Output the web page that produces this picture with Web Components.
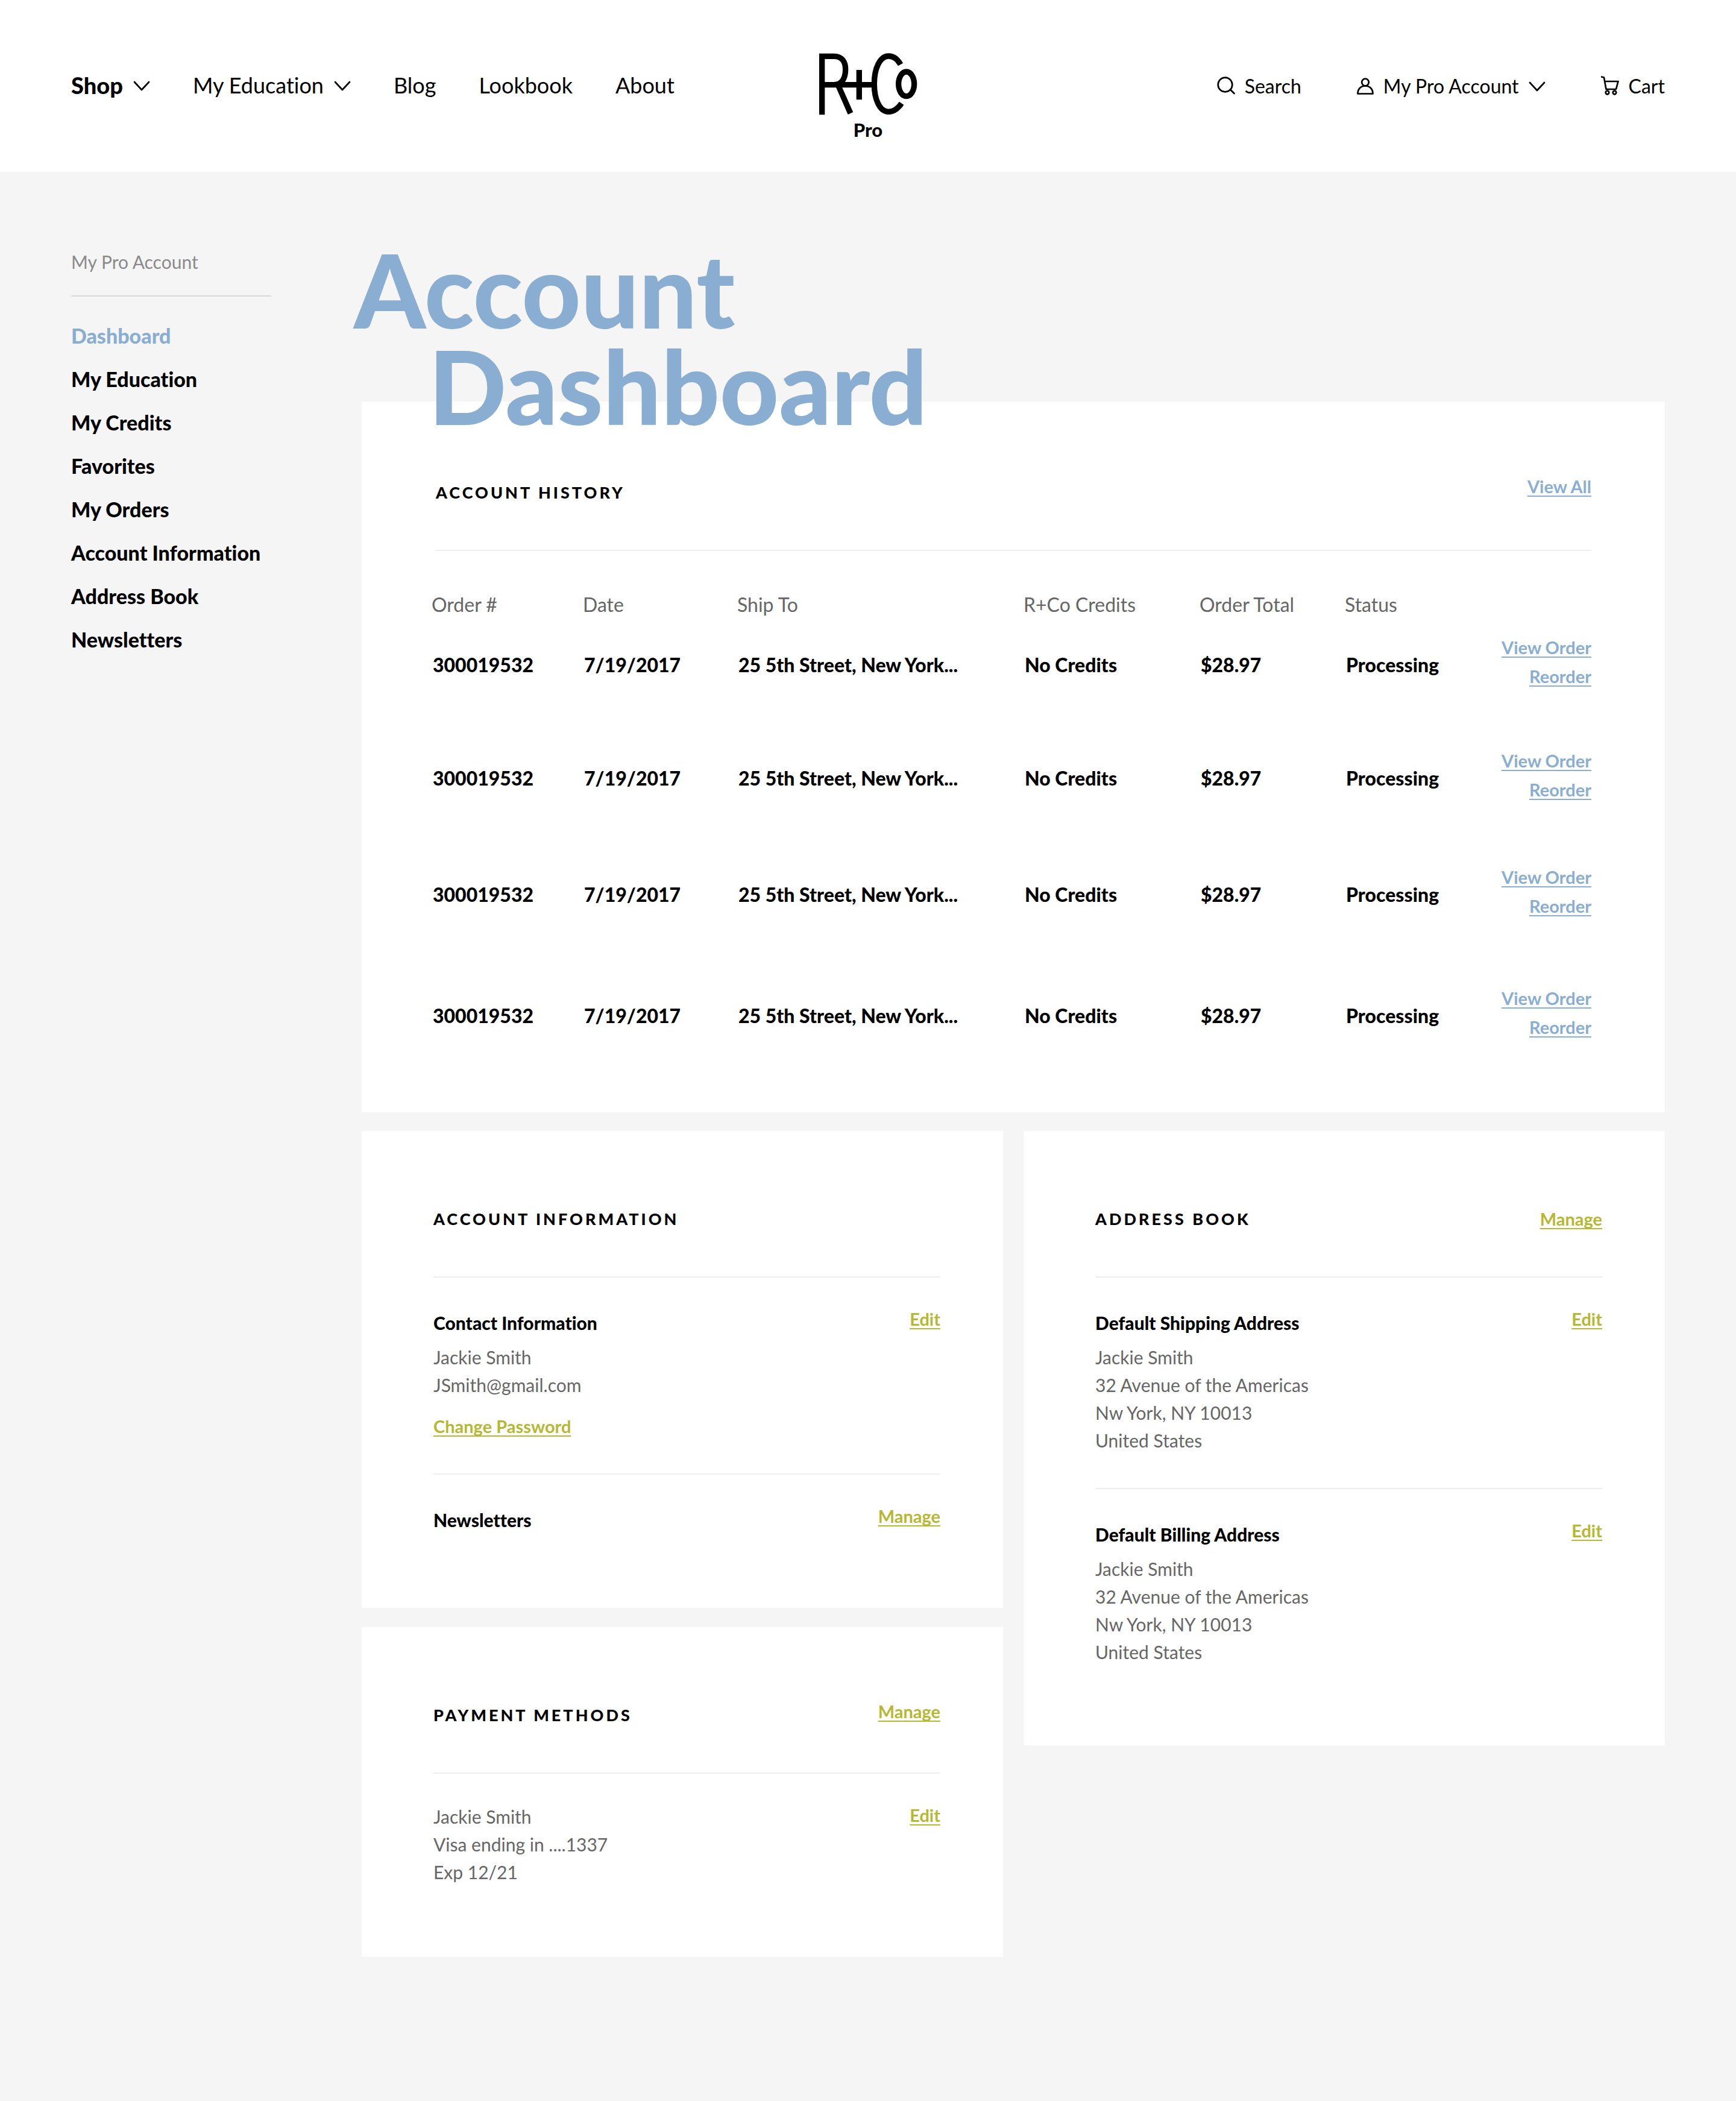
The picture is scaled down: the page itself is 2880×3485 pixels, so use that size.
<!DOCTYPE html>
<html lang="en">
<head>
<meta charset="utf-8">
<meta name="viewport" content="width=device-width, initial-scale=1">
<title>Account Dashboard</title>
<style>
  body {
    margin: 0;
    background: #f5f5f5;
    color: #000;
    font-family: Lato, "Open Sans", sans-serif;
    font-variant-ligatures: none;
    --blue: #8aadd2;
    --green: #b6b832;
    --muted: #666;
    --rule: #eee;
  }
</style>
</head>
<body>
<pro-page></pro-page>
<script>
const define = (name, html) => {
  const template = document.createElement('template');
  template.innerHTML = html;
  customElements.define(name, class extends HTMLElement {
    constructor() {
      super();
      this.attachShadow({ mode: 'open' }).append(template.content.cloneNode(true));
    }
  });
};

/* Line icons drawn with the current text colour */
const icons = {
  chevron: ['0 0 28 17', 28, 17, '<path d="M2 2l12 13L26 2"/>'],
  search: ['0 0 30 30', 30, 30, '<circle cx="13.5" cy="13.5" r="11.800"/><path d="M22 21.500l6.500 6.500"/>'],
  user: ['0 0 28 30', 28, 30, '<circle cx="14" cy="9.500" r="5.800"/><path d="M1.500 28.500H26.500C26.500 20.500 21.500 15.500 14 15.500C6.500 15.500 1.500 20.500 1.500 28.500Z"/>'],
  cart: ['0 0 30 32', 30, 32, '<path d="M1 1.500L5 2.500L8.500 22H25L28.500 9H6.200"/><circle cx="10.500" cy="27.500" r="2.800"/><circle cx="22.500" cy="27.500" r="2.800"/>']
};
customElements.define('pro-icon', class extends HTMLElement {
  connectedCallback() {
    if (this.shadowRoot) return;
    const [box, w, h, shape] = icons[this.getAttribute('name')];
    this.attachShadow({ mode: 'open' }).innerHTML = `
      <style>
        :host{display:block;flex:none}
        :host([name=chevron]){margin-top:3px}
        svg{display:block;fill:none;stroke:currentColor;stroke-width:2.700;stroke-linecap:round;stroke-linejoin:round}
      </style>
      <svg viewBox="${box}" width="${w}" height="${h}" aria-hidden="true">${shape}</svg>`;
  }
});

/* Underlined text link */
customElements.define('text-link', class extends HTMLElement {
  connectedCallback() {
    if (this.shadowRoot) return;
    this.attachShadow({ mode: 'open' }).innerHTML = `
      <style>
        :host{display:block;line-height:var(--action-line,28px);font-size:29px;font-weight:700;white-space:nowrap}
        a{color:var(--link-color,var(--green));text-decoration:underline;text-decoration-thickness:2px;text-underline-offset:4px;text-decoration-skip-ink:none}
      </style><a href="#"><slot></slot></a>`;
  }
});

define('brand-logo', `
  <style>
    :host{display:block}
    a{display:flex;flex-direction:column;align-items:center;color:inherit;text-decoration:none}
    svg{display:block;fill:none;stroke:currentColor;stroke-width:28}
    span{font-size:31px;line-height:32px;font-weight:900;margin-top:8px}
  </style>
  <a href="#" aria-label="R+Co Pro">
    <svg viewBox="113 86 492 309" width="164" height="103" aria-hidden="true">
      <path d="M130 393V102H190C228 102 247 128 247 168C247 212 228 244 190 244M130 244H390M212 250L272 386M315 170V318"/>
      <path d="M521 143C505 115 485 101 461 101C420 101 390 160 390 240C390 322 420 378 461 378C488 378 508 362 526 336"/>
      <ellipse cx="550" cy="240" rx="39" ry="61"/>
    </svg>
    <span>Pro</span>
  </a>`);

define('site-header', `
  <style>
    :host{display:grid;grid-template-columns:1fr auto 1fr;align-items:start;height:285px;box-sizing:border-box;padding:88px 118px 0;background:#fff}
    nav{display:flex;align-items:center;height:108px}
    a{display:flex;align-items:center;color:inherit;text-decoration:none;white-space:nowrap}
    .main{gap:71px;height:106px;font-size:36px}
    .main a{gap:17px}
    .main .on{font-weight:900;font-size:38px}
    .tools{justify-content:flex-end;gap:92px;font-size:32px}
    .tools a{gap:16px}
  </style>
  <nav class="main" aria-label="Main">
    <a href="#" class="on">Shop<pro-icon name="chevron"></pro-icon></a>
    <a href="#">My Education<pro-icon name="chevron"></pro-icon></a>
    <a href="#">Blog</a>
    <a href="#">Lookbook</a>
    <a href="#">About</a>
  </nav>
  <brand-logo></brand-logo>
  <nav class="tools" aria-label="Account tools">
    <a href="#"><pro-icon name="search"></pro-icon>Search</a>
    <a href="#"><pro-icon name="user"></pro-icon>My Pro Account<pro-icon name="chevron"></pro-icon></a>
    <a href="#"><pro-icon name="cart"></pro-icon>Cart</a>
  </nav>`);

define('account-menu', `
  <style>
    :host{display:block}
    p{margin:0;padding-bottom:36px;border-bottom:2px solid #d8d8d8;font-size:30px;line-height:40px;color:#8a8a8a}
    ul{list-style:none;margin:29px 0 0;padding:0}
    li{font-size:34px;line-height:72px;font-weight:900;white-space:nowrap}
    a{color:inherit;text-decoration:none}
    .on{color:var(--blue)}
  </style>
  <p>My Pro Account</p>
  <nav aria-label="My Pro Account"><ul>
    <li><a href="#" class="on" aria-current="page">Dashboard</a></li>
    <li><a href="#">My Education</a></li>
    <li><a href="#">My Credits</a></li>
    <li><a href="#">Favorites</a></li>
    <li><a href="#">My Orders</a></li>
    <li><a href="#">Account Information</a></li>
    <li><a href="#">Address Book</a></li>
    <li><a href="#">Newsletters</a></li>
  </ul></nav>`);

/* White panel: heading, optional action link, body below a rule */
define('info-card', `
  <style>
    :host{display:block;box-sizing:border-box;background:#fff;padding:126px 104px var(--pad-end,76px) 119px}
    header{display:flex;justify-content:space-between;align-items:flex-start;padding-bottom:75px;border-bottom:2px solid var(--rule)}
    ::slotted(h2){margin:0;font-size:27px;line-height:40px;font-weight:900;letter-spacing:4px;text-transform:uppercase}
  </style>
  <header><slot name="title"></slot><slot name="action"></slot></header>
  <slot></slot>`);

define('card-section', `
  <style>
    :host{display:flex;justify-content:space-between;align-items:flex-start;padding:55px 0 56px}
    :host(:not(:first-of-type)){border-top:2px solid var(--rule)}
    ::slotted(h3){margin:0;font-size:30px;line-height:40px;font-weight:900}
    ::slotted(p){margin:14px 0 0;font-size:30px;line-height:46px;color:var(--muted)}
    ::slotted(p:first-child){margin-top:-7px}
    ::slotted(text-link:not([slot])){margin-top:24px;--action-line:44px}
  </style>
  <div><slot></slot></div><slot name="action"></slot>`);

define('order-table', `
  <style>
    :host{display:block;margin:69px 0 0 -7px}
    table{width:100%;border-collapse:collapse;table-layout:fixed;text-align:left}
    th,td{padding:0;vertical-align:top;white-space:nowrap}
    th{height:67px;font-size:32px;line-height:40px;font-weight:400;color:var(--muted)}
    td{padding:30px 0 0 2px;font-size:32px;line-height:46px;font-weight:900}
    td:last-child{padding-top:0;text-align:right;--action-line:48px;--link-color:var(--blue)}
    tr.r1{height:188px}tr.r2{height:193px}tr.r3{height:201px}
  </style>
  <table>
    <colgroup><col style="width:251px"><col style="width:256px"><col style="width:475px"><col style="width:292px"><col style="width:241px"><col style="width:180px"><col></colgroup>
    <thead><tr><th>Order #</th><th>Date</th><th>Ship To</th><th>R+Co Credits</th><th>Order Total</th><th>Status</th><th></th></tr></thead>
    <tbody>${[1, 2, 3, 4].map(n => `
      <tr class="r${n}"><td>300019532</td><td>7/19/2017</td><td>25 5th Street, New York...</td><td>No Credits</td><td>$28.97</td><td>Processing</td>
      <td><text-link>View Order</text-link><text-link>Reorder</text-link></td></tr>`).join('')}
    </tbody>
  </table>`);

define('pro-page', `
  <style>
    :host{display:block}
    .body{display:grid;grid-template-columns:332px 1fr;gap:150px;padding:114px 118px 236px}
    account-menu{margin-top:15px}
    h1{position:relative;z-index:1;margin:0 0 -53px -13px;font-size:170px;line-height:160px;font-weight:900;color:var(--blue)}
    h1 span{display:block}
    h1 .in{padding-left:124px}
    .history{padding:131px 122px 117px 123px;--link-color:var(--blue)}
    .cards{display:grid;grid-template-columns:1fr 1fr;gap:34px;align-items:start;margin-top:31px}
    .col{display:grid;gap:32px}
  </style>
  <site-header></site-header>
  <div class="body">
    <account-menu></account-menu>
    <main>
      <h1><span>Account</span><span class="in">Dashboard</span></h1>
      <info-card class="history">
        <h2 slot="title">Account History</h2>
        <text-link slot="action" style="--action-line:20px">View All</text-link>
        <order-table></order-table>
      </info-card>
      <div class="cards">
        <div class="col">
          <info-card style="--pad-end:70px">
            <h2 slot="title">Account Information</h2>
            <card-section>
              <h3>Contact Information</h3>
              <p>Jackie Smith<br>JSmith@gmail.com</p>
              <text-link>Change Password</text-link>
              <text-link slot="action">Edit</text-link>
            </card-section>
            <card-section>
              <h3>Newsletters</h3>
              <text-link slot="action">Manage</text-link>
            </card-section>
          </info-card>
          <info-card style="--pad-end:62px">
            <h2 slot="title">Payment Methods</h2>
            <text-link slot="action">Manage</text-link>
            <card-section>
              <p>Jackie Smith<br>Visa ending in ....1337<br>Exp 12/21</p>
              <text-link slot="action">Edit</text-link>
            </card-section>
          </info-card>
        </div>
        <info-card>
          <h2 slot="title">Address Book</h2>
          <text-link slot="action" style="--action-line:40px">Manage</text-link>
          <card-section>
            <h3>Default Shipping Address</h3>
            <p>Jackie Smith<br>32 Avenue of the Americas<br>Nw York, NY 10013<br>United States</p>
            <text-link slot="action">Edit</text-link>
          </card-section>
          <card-section>
            <h3>Default Billing Address</h3>
            <p>Jackie Smith<br>32 Avenue of the Americas<br>Nw York, NY 10013<br>United States</p>
            <text-link slot="action">Edit</text-link>
          </card-section>
        </info-card>
      </div>
    </main>
  </div>`);
</script>
</body>
</html>
